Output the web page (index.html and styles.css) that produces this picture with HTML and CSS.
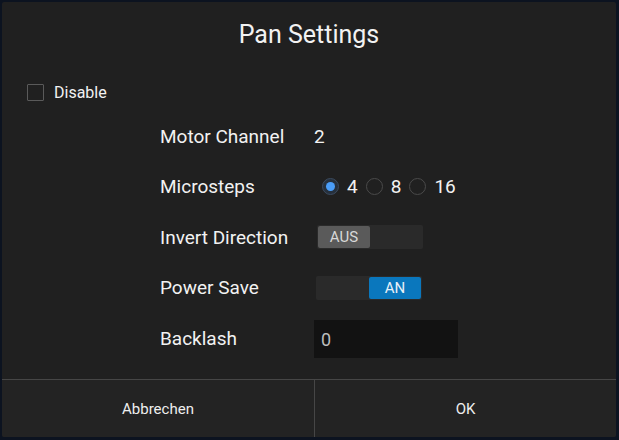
FILE: index.html
```html
<!DOCTYPE html>
<html>
<head>
<meta charset="utf-8">
<link rel="stylesheet" href="styles.css">
</head>
<body>
<div class="dialog">
  <div class="title">Pan Settings</div>
  <label class="disable">
    <span class="checkbox"></span>
    <span>Disable</span>
  </label>
  <div class="form">
    <div class="row">
      <div class="label">Motor Channel</div>
      <div class="value">2</div>
    </div>
    <div class="row">
      <div class="label">Microsteps</div>
      <div class="value radios">
        <span class="radio checked"></span><span class="rtext">4</span>
        <span class="radio"></span><span class="rtext">8</span>
        <span class="radio"></span><span class="rtext">16</span>
      </div>
    </div>
    <div class="row">
      <div class="label">Invert Direction</div>
      <div class="value">
        <div class="toggle off"><span class="seg on-seg">AUS</span><span class="seg"></span></div>
      </div>
    </div>
    <div class="row">
      <div class="label">Power Save</div>
      <div class="value">
        <div class="toggle on"><span class="seg"></span><span class="seg blue">AN</span></div>
      </div>
    </div>
    <div class="row">
      <div class="label">Backlash</div>
      <div class="value">
        <div class="input">0</div>
      </div>
    </div>
  </div>
  <div class="footer">
    <div class="btn">Abbrechen</div>
    <div class="btn">OK</div>
  </div>
</div>
</body>
</html>
```
FILE: styles.css
```css
html, body {
  margin: 0;
  padding: 0;
  background: #0c1320;
  font-family: Roboto, "Liberation Sans", sans-serif;
  color: #f2f2f2;
}
.dialog {
  position: relative;
  margin: 2px 3px 0 2px;
  height: 435px;
  background: #202020;
  display: flex;
  flex-direction: column;
  border-radius: 2px;
  overflow: hidden;
}
.title {
  text-align: center;
  font-size: 25px;
  height: 28px;
  line-height: 28px;
  margin-top: 19px;
}
.disable {
  display: flex;
  align-items: center;
  margin-top: 33px;
  margin-left: 25px;
  font-size: 16px;
  height: 20px;
}
.checkbox {
  width: 15px;
  height: 15px;
  border: 1px solid #5a5a5a;
  border-radius: 1px;
  margin-right: 10px;
  box-sizing: content-box;
}
.form {
  margin-top: 9px;
  margin-left: 158px;
  display: flex;
  flex-direction: column;
}
.row {
  display: flex;
  align-items: center;
  height: 50.5px;
  font-size: 19px;
}
.label {
  width: 154px;
}
.value {
  display: flex;
  align-items: center;
}
.radios .radio {
  width: 15px;
  height: 15px;
  border-radius: 50%;
  border: 1px solid #4a4a4a;
  margin-left: 1px;
  margin-right: 8px;
  position: relative;
  box-sizing: content-box;
}
.radios .radio:first-child {
  margin-left: 8px;
}
.radio.checked {
  border-color: #3b4a5e;
  background: #26303c;
}
.radio.checked::after {
  content: "";
  position: absolute;
  left: 3px;
  top: 3px;
  width: 9px;
  height: 9px;
  border-radius: 50%;
  background: #4a9df8;
}
.rtext {
  margin-right: 7px;
}
.toggle {
  display: flex;
  width: 106px;
  height: 24px;
  background: #2a2a2a;
  border-radius: 2px;
  padding: 1px;
  box-sizing: border-box;
  margin-left: 3px;
  font-size: 15px;
}
.toggle.on {
  margin-left: 2px;
}
.seg {
  flex: 1;
  display: flex;
  align-items: center;
  justify-content: center;
  border-radius: 2px;
}
.on-seg {
  background: #5a5a5a;
  color: #d8d8d8;
}
.seg.blue {
  background: #0a77bd;
  color: #e6f0f8;
}
.input {
  width: 144px;
  height: 38px;
  background: #121212;
  box-sizing: border-box;
  padding-left: 7px;
  display: flex;
  align-items: center;
  color: #bdbdbd;
  font-size: 18px;
  margin-top: 2px;
}
.footer {
  margin-top: auto;
  display: flex;
  border-top: 1px solid #464646;
  background: #232323;
  height: 57px;
}
.btn {
  flex: 1;
  display: flex;
  align-items: center;
  justify-content: center;
  font-size: 15px;
  color: #eeeeee;
}
.btn:first-child {
  flex: 0 0 312px;
  border-right: 1px solid #464646;
}
```
